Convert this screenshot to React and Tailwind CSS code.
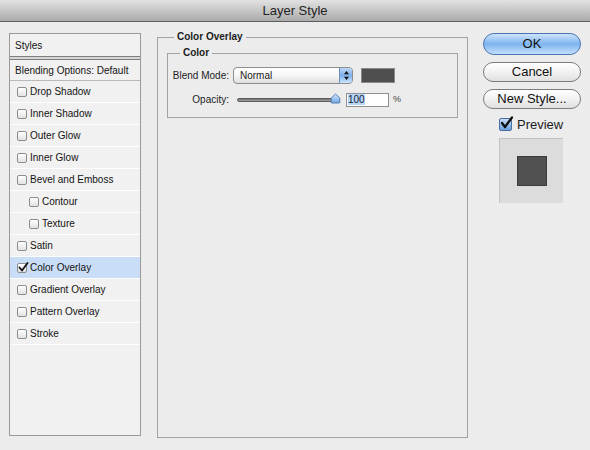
import React from "react";

const font = { fontFamily: '"Liberation Sans", Arial, sans-serif' };

function Box({ checked }) {
  return (
    <span className="relative inline-flex h-[10px] w-[10px] shrink-0 items-center justify-center rounded-[2px] border border-[#8c8c8c] bg-gradient-to-b from-[#ffffff] to-[#e2e2e2]">
      {checked && (
        <svg width="11" height="11" viewBox="0 0 11 11" className="absolute -top-[2px] left-[0px]">
          <path d="M1.5 5.5 L4 8.5 L9.5 1" fill="none" stroke="#111" strokeWidth="1.8" strokeLinecap="round" strokeLinejoin="round" />
        </svg>
      )}
    </span>
  );
}

const items = [
  { label: "Drop Shadow" },
  { label: "Inner Shadow" },
  { label: "Outer Glow" },
  { label: "Inner Glow" },
  { label: "Bevel and Emboss" },
  { label: "Contour", indent: true },
  { label: "Texture", indent: true },
  { label: "Satin" },
  { label: "Color Overlay", checked: true, selected: true },
  { label: "Gradient Overlay" },
  { label: "Pattern Overlay" },
  { label: "Stroke" },
];

export default function App() {
  return (
    <div className="flex h-[450px] w-[590px] flex-col overflow-hidden bg-[#ececec] text-[#1c1c1c]" style={font}>
      {/* Title bar */}
      <div className="flex h-[22px] shrink-0 items-center justify-center border-b border-[#5e5e5e] bg-gradient-to-b from-[#e2e2e2] to-[#ababab] text-[13px] text-[#222]">
        Layer Style
      </div>

      <div className="flex flex-1 pl-[9px] pt-[11px]">
        {/* Left list */}
        <div className="flex h-[403px] w-[132px] shrink-0 flex-col border border-[#9a9a9a] bg-[#f1f1f1] text-[10px] text-[#141414]">
          <div className="flex h-[22px] items-center pl-[5px]">Styles</div>
          <div className="h-[4px] border-y border-[#7d7d7d] bg-[#d6d6d6]" />
          <div className="flex h-[21px] items-center border-b border-[#b9b9b9] pl-[5px]">Blending Options: Default</div>
          {items.map((it) => (
            <div
              key={it.label}
              className={
                "flex h-[22px] items-center gap-[3px] border-b border-[#fdfdfd] " +
                (it.indent ? "pl-[19px] " : "pl-[7px] ") +
                (it.selected ? "bg-[#c9ddf6]" : "")
              }
            >
              <Box checked={it.checked} />
              <span>{it.label}</span>
            </div>
          ))}
        </div>

        {/* Middle panel */}
        <div className="relative ml-[16px] mt-[4px] h-[401px] w-[311px] shrink-0 border border-[#a2a2a2] px-[9px] pt-[15px]">
          <span className="absolute -top-[7px] left-[16px] bg-[#ececec] px-[3px] text-[10px] font-bold leading-[12px]">
            Color Overlay
          </span>
          <div className="relative h-[65px] w-[291px] border border-[#a2a2a2] pt-[13px]">
            <span className="absolute -top-[7px] left-[12px] bg-[#ececec] px-[3px] text-[10px] font-bold leading-[12px]">
              Color
            </span>
            {/* Blend mode row */}
            <div className="flex h-[17px] items-center">
              <span className="w-[61px] text-right text-[10px]">Blend Mode:</span>
              <div className="ml-[4px] flex h-[17px] w-[120px] items-center rounded-[4px] border border-[#8e8e8e] bg-gradient-to-b from-[#ffffff] via-[#f6f6f6] to-[#dedede] text-[10px]">
                <span className="flex-1 pl-[6px]">Normal</span>
                <span className="flex h-[15px] w-[13px] items-center justify-center rounded-r-[3px] border-l border-[#6d8fbf] bg-gradient-to-b from-[#bcd8f7] via-[#7fb0ea] to-[#cce5fc]">
                  <svg width="7" height="11" viewBox="0 0 7 11">
                    <path d="M3.5 1 L6 4.2 L1 4.2 Z" fill="#111" />
                    <path d="M3.5 10 L6 6.8 L1 6.8 Z" fill="#111" />
                  </svg>
                </span>
              </div>
              <div className="ml-[8px] h-[15px] w-[34px] border border-[#8a8a8a] bg-[#4f4f4f]" />
            </div>
            {/* Opacity row */}
            <div className="mt-[9px] flex h-[13px] items-center">
              <span className="w-[61px] text-right text-[10px]">Opacity:</span>
              <div className="relative ml-[8px] flex h-[13px] w-[104px] items-center">
                <div className="h-[4px] w-[98px] rounded-full border border-[#5c5c5c] bg-gradient-to-b from-[#6b6b6b] to-[#a9a9a9]" />
                <svg width="11" height="11" viewBox="0 0 11 11" className="absolute right-0 top-[0px]">
                  <defs>
                    <linearGradient id="tg" x1="0" y1="0" x2="0" y2="1">
                      <stop offset="0" stopColor="#d5e8fb" />
                      <stop offset="1" stopColor="#6ea6e6" />
                    </linearGradient>
                  </defs>
                  <path d="M5.5 1 L9.8 5 L9.8 9.5 Q9.8 10 9.3 10 L1.7 10 Q1.2 10 1.2 9.5 L1.2 5 Z" fill="url(#tg)" stroke="#4f76ac" strokeWidth="0.9" />
                </svg>
              </div>
              <div className="ml-[5px] flex h-[14px] w-[43px] items-center border border-[#8f8f8f] bg-white pl-[1px] text-[10px]">
                <span className="bg-[#b5d5fd] leading-[11px]">100</span>
              </div>
              <span className="ml-[4px] text-[9px] text-[#444]">%</span>
            </div>
          </div>
        </div>

        {/* Right column */}
        <div className="ml-[15px] flex w-[98px] shrink-0 flex-col items-center">
          <button className="flex h-[22px] w-[98px] items-center justify-center rounded-full border border-[#4874b0] bg-gradient-to-b from-[#cfe4fb] via-[#7db3ee] to-[#c4e2fd] text-[13px] text-[#111]">
            OK
          </button>
          <button className="mt-[7px] flex h-[20px] w-[98px] items-center justify-center rounded-full border border-[#7b7b7b] bg-gradient-to-b from-[#ffffff] via-[#f2f2f2] to-[#e0e0e0] text-[13px] text-[#111]">
            Cancel
          </button>
          <button className="mt-[7px] flex h-[20px] w-[98px] items-center justify-center rounded-full border border-[#7b7b7b] bg-gradient-to-b from-[#ffffff] via-[#f2f2f2] to-[#e0e0e0] text-[13px] text-[#111]">
            New Style...
          </button>
          <div className="mt-[6px] flex w-full items-center pl-[16px]">
            <span className="relative flex h-[13px] w-[13px] items-center justify-center rounded-[2px] border border-[#4a6fa5] bg-gradient-to-b from-[#c6dcf6] to-[#6b9fdc]">
              <svg width="14" height="14" viewBox="0 0 14 14" className="absolute -top-[3px] left-[0px]">
                <path d="M2 7 L5 11 L12 1.5" fill="none" stroke="#0d0d0d" strokeWidth="2.2" strokeLinecap="round" strokeLinejoin="round" />
              </svg>
            </span>
            <span className="ml-[5px] text-[13px]">Preview</span>
          </div>
          <div className="mt-[3px] ml-[16px] flex h-[65px] w-[64px] items-center justify-center self-start border-l border-t border-[#c2c2c2] bg-[#dcdcdc]">
            <div className="h-[30px] w-[30px] border border-[#3c3c3c] bg-[#505050]" />
          </div>
        </div>
      </div>
    </div>
  );
}
